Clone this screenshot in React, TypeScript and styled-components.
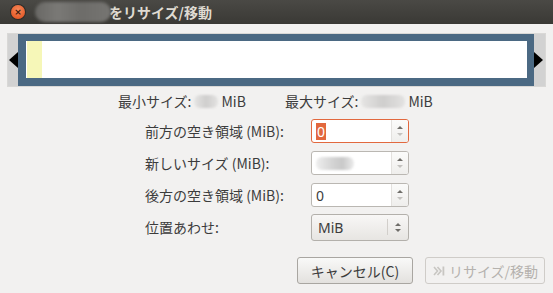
import React from "react";
import styled, { createGlobalStyle } from "styled-components";

const GlobalStyle = createGlobalStyle`
  html, body {
    margin: 0;
    padding: 0;
    background: #f2f1f0;
  }
  body {
    font-family: "Noto Sans CJK JP", "Noto Sans", "DejaVu Sans", sans-serif;
    color: #3c3c3c;
  }
`;

const Window = styled.div`
  width: 553px;
  height: 293px;
  display: flex;
  flex-direction: column;
  background: #f2f1f0;
  overflow: hidden;
`;

const TitleBar = styled.div`
  height: 24px;
  flex: none;
  display: flex;
  align-items: center;
  background: linear-gradient(#4a4945, #3a3935);
  padding-left: 11px;
`;

const CloseButton = styled.div`
  width: 14px;
  height: 14px;
  border-radius: 50%;
  background: radial-gradient(circle at 50% 35%, #f58a5c, #df4a16);
  box-shadow: 0 0 0 1px #2c2b28;
  display: flex;
  align-items: center;
  justify-content: center;
  color: #3a1a0c;
  font-size: 9px;
  font-weight: bold;
  line-height: 1;
  font-family: "DejaVu Sans", sans-serif;
`;

const BlurredName = styled.div`
  width: 76px;
  height: 20px;
  margin-left: 10px;
  border-radius: 10px;
  background: linear-gradient(90deg, #696865 0%, #7a7976 30%, #6d6c69 60%, #767572 100%);
  filter: blur(1.5px);
`;

const Title = styled.div`
  font-size: 14px;
  font-weight: bold;
  color: #dfdbd2;
  margin-left: -2px;
`;

const Body = styled.div`
  flex: 1;
  display: flex;
  flex-direction: column;
  padding: 9px 7px 0 7px;
`;

const PartitionFrame = styled.div`
  height: 52px;
  border: 1px solid #d9d8d6;
  display: flex;
`;

const SideBand = styled.div<{ side: "left" | "right" }>`
  width: ${({ side }) => (side === "left" ? 10 : 11)}px;
  background: #d2d2d2;
  display: flex;
  align-items: center;
`;

const Arrow = styled.div<{ dir: "left" | "right" }>`
  width: 0;
  height: 0;
  border-top: 8px solid transparent;
  border-bottom: 8px solid transparent;
  ${({ dir }) =>
    dir === "left"
      ? "border-right: 9px solid #000; margin-left: 1px;"
      : "border-left: 9px solid #000;"}
`;

const PartitionBlock = styled.div`
  flex: 1;
  background: #4b6983;
  padding: 7px 7px 8px 8px;
  display: flex;
`;

const PartitionInner = styled.div`
  flex: 1;
  background: #ffffff;
  display: flex;
`;

const UsedSpace = styled.div`
  width: 15px;
  margin-left: 1px;
  background: #f6f7b8;
`;

const InfoRow = styled.div`
  display: flex;
  align-items: center;
  height: 18px;
  margin-top: 5px;
  padding-left: 111px;
  font-size: 14px;
  color: #3c3c3c;
`;

const InfoGroup = styled.div<{ gap: number }>`
  display: flex;
  align-items: center;
  margin-right: ${({ gap }) => gap}px;
`;

const BlurredValue = styled.div<{ w: number }>`
  width: ${({ w }) => w}px;
  height: 13px;
  margin: 0 3px 0 3px;
  border-radius: 6px;
  background: linear-gradient(90deg, #e6e5e4, #cfcecd 50%, #e3e2e1);
  filter: blur(1px);
`;

const Form = styled.div`
  display: grid;
  grid-template-columns: 166px 98px;
  grid-auto-rows: 24px;
  row-gap: 8px;
  margin-top: 9px;
  margin-left: 138px;
  align-items: center;
`;

const Label = styled.div`
  font-size: 14px;
  color: #3c3c3c;
  white-space: nowrap;
`;

const SpinBox = styled.div<{ focused?: boolean }>`
  height: 24px;
  box-sizing: border-box;
  border: 1px solid ${({ focused }) => (focused ? "#e2683e" : "#bab7b2")};
  border-radius: 3px;
  background: #fff;
  display: flex;
  overflow: hidden;
`;

const SpinText = styled.div`
  flex: 1;
  display: flex;
  align-items: center;
  padding-left: 4px;
  font-size: 14px;
  font-family: "Noto Sans", "DejaVu Sans", sans-serif;
  color: #3c3c3c;
`;

const Selected = styled.span`
  background: #e2683e;
  color: #fff;
  padding: 0 1px;
  line-height: 17px;
`;

const SpinButtons = styled.div`
  width: 16px;
  border-left: 1px solid #e3e1de;
  background: linear-gradient(#fbfbfa, #efeeec);
  display: flex;
  flex-direction: column;
  align-items: center;
  justify-content: center;
  gap: 4px;
`;

const Tri = styled.div<{ up?: boolean; faded?: boolean }>`
  width: 0;
  height: 0;
  border-left: 3px solid transparent;
  border-right: 3px solid transparent;
  ${({ up, faded }) =>
    up
      ? `border-bottom: 3px solid ${faded ? "#c4c2bf" : "#6f6d69"};`
      : `border-top: 3px solid ${faded ? "#c4c2bf" : "#6f6d69"};`}
`;

const BlurredInput = styled.div`
  width: 38px;
  height: 13px;
  border-radius: 6px;
  background: linear-gradient(90deg, #eeeeee, #d3d3d3 45%, #c9c9c9 70%, #ececec);
  filter: blur(1px);
`;

const Combo = styled.div`
  height: 27px;
  box-sizing: border-box;
  border: 1px solid #b3b0ab;
  border-radius: 3px;
  background: linear-gradient(#f8f7f6, #e7e5e2);
  display: flex;
  align-items: center;
`;

const ComboText = styled.div`
  flex: 1;
  padding-left: 6px;
  font-size: 14px;
  font-family: "Noto Sans", "DejaVu Sans", sans-serif;
  color: #3c3c3c;
`;

const ComboArrows = styled.div`
  width: 20px;
  height: 16px;
  border-left: 1px solid #d2cfcb;
  display: flex;
  flex-direction: column;
  align-items: center;
  justify-content: center;
  gap: 3px;
`;

const ButtonRow = styled.div`
  display: flex;
  justify-content: flex-end;
  gap: 12px;
  margin-top: 18px;
  padding-right: 1px;
`;

const Button = styled.div<{ disabled?: boolean; w: number }>`
  width: ${({ w }) => w}px;
  height: 27px;
  box-sizing: border-box;
  border: 1px solid ${({ disabled }) => (disabled ? "#cfccc8" : "#a9a6a1")};
  border-radius: 3px;
  background: ${({ disabled }) =>
    disabled ? "#f2f1f0" : "linear-gradient(#f9f9f8, #e3e1de)"};
  display: flex;
  align-items: center;
  justify-content: center;
  gap: 3px;
  font-size: 14px;
  color: ${({ disabled }) => (disabled ? "#b5b2ae" : "#3c3c3c")};
`;

const ApplyIcon = () => (
  <svg width="14" height="14" viewBox="0 0 14 14">
    <path d="M2 3 L5.5 7 L2 11" fill="none" stroke="#c8c6c2" strokeWidth="1.6" />
    <path d="M5.5 3 L9 7 L5.5 11" fill="none" stroke="#c8c6c2" strokeWidth="1.6" />
    <rect x="10.5" y="2.5" width="1.8" height="9" fill="#c8c6c2" />
  </svg>
);

const Spin = ({ children, focused }: { children: React.ReactNode; focused?: boolean }) => (
  <SpinBox focused={focused}>
    <SpinText>{children}</SpinText>
    <SpinButtons>
      <Tri up />
      <Tri faded />
    </SpinButtons>
  </SpinBox>
);

export default function App() {
  return (
    <>
      <GlobalStyle />
      <Window>
        <TitleBar>
          <CloseButton>×</CloseButton>
          <BlurredName />
          <Title>をリサイズ/移動</Title>
        </TitleBar>
        <Body>
          <PartitionFrame>
            <SideBand side="left">
              <Arrow dir="left" />
            </SideBand>
            <PartitionBlock>
              <PartitionInner>
                <UsedSpace />
              </PartitionInner>
            </PartitionBlock>
            <SideBand side="right">
              <Arrow dir="right" />
            </SideBand>
          </PartitionFrame>

          <InfoRow>
            <InfoGroup gap={39}>
              最小サイズ:
              <BlurredValue w={24} />
              MiB
            </InfoGroup>
            <InfoGroup gap={0}>
              最大サイズ:
              <BlurredValue w={44} />
              MiB
            </InfoGroup>
          </InfoRow>

          <Form>
            <Label>前方の空き領域 (MiB):</Label>
            <Spin focused>
              <Selected>0</Selected>
            </Spin>
            <Label>新しいサイズ (MiB):</Label>
            <Spin>
              <BlurredInput />
            </Spin>
            <Label>後方の空き領域 (MiB):</Label>
            <Spin>0</Spin>
            <Label>位置あわせ:</Label>
            <Combo>
              <ComboText>MiB</ComboText>
              <ComboArrows>
                <Tri up />
                <Tri />
              </ComboArrows>
            </Combo>
          </Form>

          <ButtonRow>
            <Button w={116}>キャンセル(C)</Button>
            <Button w={120} disabled>
              <ApplyIcon />
              リサイズ/移動
            </Button>
          </ButtonRow>
        </Body>
      </Window>
    </>
  );
}
